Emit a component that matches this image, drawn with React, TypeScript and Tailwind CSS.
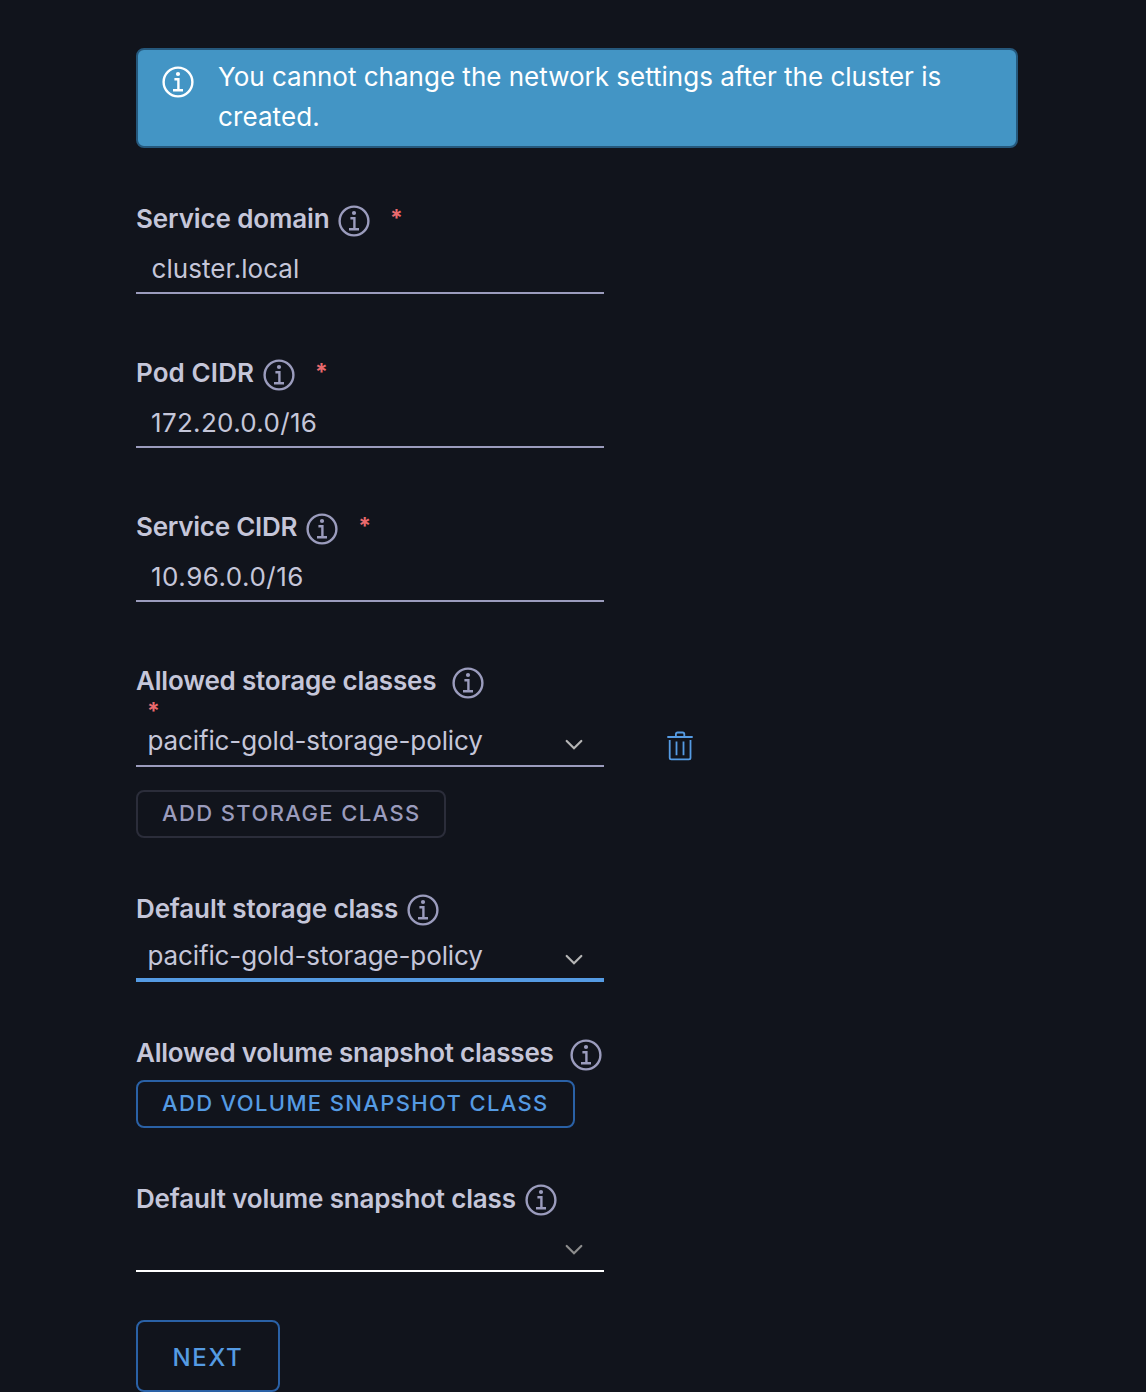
import type { ReactNode } from "react";

function InfoIcon({ className = "" }: { className?: string }) {
  return (
    <svg viewBox="0 0 32 32" fill="none" stroke="currentColor" className={`h-8 w-8 shrink-0 ${className}`}>
      <circle cx="16" cy="16" r="14.4" strokeWidth="2.4" />
      <circle cx="16" cy="8" r="2.1" fill="currentColor" stroke="none" />
      <path d="M12.4 13.2H16.4V24M11 24.3H21" strokeWidth="2.4" />
    </svg>
  );
}

function Chevron({ className = "" }: { className?: string }) {
  return (
    <svg viewBox="0 0 18 12" fill="none" stroke="currentColor" strokeWidth="2.2" className={`h-3 w-[18px] shrink-0 ${className}`}>
      <path d="M1.7 2 9 9.2 16.3 2" strokeLinecap="round" />
    </svg>
  );
}

function TrashIcon() {
  return (
    <svg viewBox="0 0 26 30" fill="none" stroke="currentColor" strokeWidth="1.8" className="h-[30px] w-[26px]">
      <path d="M0.3 6H25.7M2.7 9V26.8Q2.7 28.4 4.3 28.4H21.9Q23.5 28.4 23.5 26.8V9M9.5 10.5V24.3M16.5 10.5V24.3M8.9 5V3.2Q8.9 1.5 10.6 1.5H15.6Q17.3 1.5 17.3 3.2V5" />
    </svg>
  );
}

function Required({ className = "" }: { className?: string }) {
  return <span className={`text-[23px] leading-none font-bold text-[#ea6a6d] ${className}`}>*</span>;
}

function Label({ text, className, iconClass = "ml-2", required = false }: { text: string; className: string; iconClass?: string; required?: boolean }) {
  return (
    <div className="flex h-10 items-center">
      <span className={`font-semibold whitespace-nowrap ${className}`}>{text}</span>
      <InfoIcon className={`mt-[3px] text-[#9b9cbd] ${iconClass}`} />
      {required && <Required className="mb-0.5 ml-5" />}
    </div>
  );
}

function TextField({ label, labelClass, iconClass, value, valueClass }: { label: string; labelClass: string; iconClass?: string; value: string; valueClass: string }) {
  return (
    <div className="mb-[59px]">
      <Label text={label} className={labelClass} iconClass={iconClass} required />
      <div className={`h-[55px] w-[468px] border-b-2 border-[#9b9cbd] pt-1.5 leading-[47px] ${valueClass}`}>{value}</div>
    </div>
  );
}

function Select({ value = "", className, chevronClass = "text-[#b5b5b5]" }: { value?: string; className: string; chevronClass?: string }) {
  return (
    <div className={`flex w-[468px] items-center justify-between pr-[21px] pl-[11.5px] ${className}`}>
      <span className="pt-px tracking-[-0.12px]">{value}</span>
      <Chevron className={chevronClass} />
    </div>
  );
}

function Button({ className, children }: { className: string; children: ReactNode }) {
  return <button className={`flex items-center rounded-lg border-2 font-medium whitespace-nowrap ${className}`}>{children}</button>;
}

export default function App() {
  return (
    <main className="h-[1392px] w-[1146px] overflow-hidden bg-[#11141c] px-[136px] pt-12 font-['Inter',sans-serif] text-[26px] leading-10 text-[#c5c6d9]">
      <div className="mb-[51px] flex h-[100px] w-[882px] rounded-lg border-2 border-[#25587c] bg-[#4395c5] pt-[7px] pl-6 text-white">
        <InfoIcon className="mt-[9px]" />
        <p className="ml-6 w-[740px]">You cannot change the network settings after the cluster is <span className="tracking-[0.1px]">created.</span></p>
      </div>

      <TextField label="Service domain" labelClass="tracking-[-0.12px]" iconClass="ml-[8.5px]" value="cluster.local" valueClass="pl-[15.5px] tracking-[0.05px]" />
      <TextField label="Pod CIDR" labelClass="tracking-[0.1px]" iconClass="ml-[9px]" value="172.20.0.0/16" valueClass="pl-[15px] tracking-[0.32px]" />
      <TextField label="Service CIDR" labelClass="tracking-[-0.25px]" iconClass="ml-[9px]" value="10.96.0.0/16" valueClass="pl-[15px] tracking-[0.5px]" />

      <section className="mt-2">
        <Label text="Allowed storage classes" className="tracking-[-0.2px]" iconClass="ml-4" />
        <div className="flex h-[15px] items-start pl-[11px]">
          <Required className="-mt-px" />
        </div>
        <div className="flex items-center">
          <Select value="pacific-gold-storage-policy" className="h-[51px] border-b-2 border-[#9b9cbd]" chevronClass="mt-[9px] text-[#b5b5b5]" />
          <span className="ml-[63px] pt-2 text-[#559be3]"><TrashIcon /></span>
        </div>
        <Button className="mt-[23px] h-12 w-[310px] border-[#2b2d3a] pb-0.5 pl-6 text-[22px] tracking-[1.38px] text-[#9b9cbd]">ADD STORAGE CLASS</Button>
      </section>

      <section className="mt-[51px]">
        <Label text="Default storage class" className="tracking-[-0.15px]" iconClass="ml-[9px] mb-px" />
        <Select value="pacific-gold-storage-policy" className="h-[53px] border-b-4 border-[#559be3] pt-1" chevronClass="mt-[9px] text-[#b5b5b5]" />
      </section>

      <section className="mt-[51px]">
        <Label text="Allowed volume snapshot classes" className="tracking-[-0.22px]" iconClass="ml-4" />
        <Button className="mt-[7px] h-12 w-[439px] border-[#2a61a6] pb-0.5 pl-6 text-[22px] tracking-[1.35px] text-[#559be3]">ADD VOLUME SNAPSHOT CLASS</Button>
      </section>

      <section className="mt-[51px]">
        <Label text="Default volume snapshot class" className="tracking-[-0.17px]" iconClass="ml-[9px] mb-px" />
        <Select className="h-[53px] border-b-2 border-white pt-1" chevronClass="mt-[7px] text-[#8d8d8d]" />
      </section>

      <Button className="mt-12 h-[72px] w-36 border-[#2a61a6] pt-1 pl-[34.5px] text-[24px] tracking-[1.7px] text-[#559be3]">NEXT</Button>
    </main>
  );
}
